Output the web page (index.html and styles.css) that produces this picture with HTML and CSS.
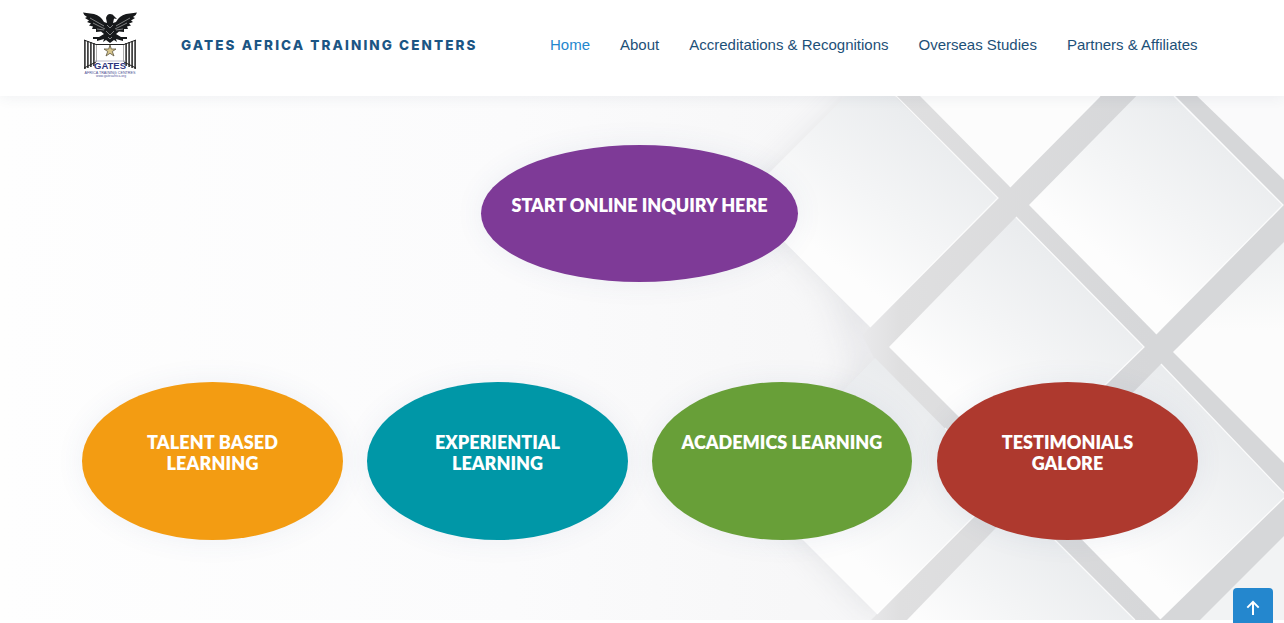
FILE: index.html
```html
<!DOCTYPE html>
<html lang="en">
<head>
<meta charset="utf-8">
<title>Gates Africa Training Centers</title>
<link rel="stylesheet" href="styles.css">
</head>
<body>
<header class="header">
  <a class="logo" href="#">
    <svg width="56" height="72" viewBox="82 11 56 72" aria-label="Gates">
      <path fill="#17191b" d="M83 12.5 L94 14 Q101 16 104 22 L107 23 L106 18 Q107 14 110 14 Q113 14 114 16 L117 19 L114 18.5 L113 23 L116 22 Q119 16 126 14 L137 12.5 Q136 16 133 17 L135 18 L131 20.5 L133 22 L129 23.5 L131 25.5 L127 26.5 L128 29 L124 29 L124 32 L119 31.5 L116 34 L121 37 L127 37 L127 39 L123 39 L123 41 L116 39 L117 42 L114 40 L110 43 L106 40 L103 42 L104 39 L97 41 L97 39 L93 39 L93 37 L99 37 L104 34 L101 31.5 L96 32 L96 29 L92 29 L93 26.5 L89 25.5 L91 23.5 L87 22 L89 20.5 L85 18 L87 17 Q84 16 83 12.5Z"/>
      <path stroke="#fff" stroke-width=".45" fill="none" d="M90 18L104 26M93 23L105 29M97 29L104 30M130 18L116 26M127 23L115 29M123 29L116 30M107 25L110 28L113 25M106 31L110 35L114 31M108 37L110 39L112 37"/>
      <g stroke="#222" fill="none" stroke-width="1.500">
        <path d="M84.900 40V69M87.900 41V68M90.900 42V67M93.900 43V66M135.100 40V69M132.100 41V68M129.100 42V67M126.100 43V66"/>
        <path d="M84 40L96 44.500M84 68L96 62M136 40L124 44.500M136 68L124 62M96 44.500H124" stroke-width="1"/>
      </g>
      <path d="M96.500 45V62M123.500 45V62" stroke="#999" stroke-width=".8"/>
      <path d="M110 45L111.300 49H116L112.300 51.500L114 56L110 53.300L106 56L107.700 51.500L104 49H108.700Z" fill="#d7c58b" stroke="#5d5540" stroke-width=".8"/>
      <path d="M94 61H126" stroke="#8b8ba4" stroke-width=".6"/>
      <text class="logo-name" x="94" y="69" textLength="32" lengthAdjust="spacingAndGlyphs">GATES</text>
      <text class="logo-sub" x="84.500" y="73.600" textLength="51" lengthAdjust="spacingAndGlyphs">AFRICA TRAINING CENTRES</text>
      <text class="logo-url" x="96" y="77.200" textLength="30" lengthAdjust="spacingAndGlyphs">www.gatesafrica.org</text>
    </svg>
  </a>
  <a class="brand" href="#">GATES AFRICA TRAINING CENTERS</a>
  <nav class="nav">
    <a class="active" href="#">Home</a>
    <a href="#">About</a>
    <a href="#">Accreditations &amp; Recognitions</a>
    <a href="#">Overseas Studies</a>
    <a href="#">Partners &amp; Affiliates</a>
  </nav>
</header>
<main class="hero">
  <svg class="backdrop" viewBox="0 96 1284 524" preserveAspectRatio="none" aria-hidden="true">
    <defs>
      <linearGradient id="wash"><stop offset="0" stop-color="#fefefe"/><stop offset=".4" stop-color="#fbfbfc"/><stop offset=".62" stop-color="#f7f7f8"/></linearGradient>
      <linearGradient id="tile" x1=".72" y1=".2" x2=".32" y2=".72"><stop offset="0" stop-color="#eaecee"/><stop offset=".55" stop-color="#f4f5f6"/><stop offset="1" stop-color="#fdfdfd"/></linearGradient>
      <linearGradient id="pale" x1=".5" y1="0" x2=".5" y2="1"><stop offset="0" stop-color="#f0f2f3"/><stop offset=".4" stop-color="#fcfcfc"/></linearGradient>
      <linearGradient id="gap" gradientUnits="userSpaceOnUse" x1="856" y1="300" x2="1150" y2="300"><stop offset="0" stop-color="#ebebed"/><stop offset=".15" stop-color="#dfdfe0"/><stop offset="1" stop-color="#d6d7d9"/></linearGradient>
      <filter id="soft" x="-30%" y="-30%" width="160%" height="160%" color-interpolation-filters="sRGB"><feGaussianBlur stdDeviation="14"/></filter>
      <filter id="edge" color-interpolation-filters="sRGB"><feGaussianBlur stdDeviation=".5"/></filter>
    </defs>
    <path fill="url(#wash)" d="M0 96H1284V620H0Z"/>
    <g filter="url(#soft)" fill="#dfe0e3">
      <path d="M742 200L870 72L998 200L870 334Z" opacity=".75"/>
      <path d="M750 487L877 350L1003 487L877 620Z" opacity=".75"/>
      <path d="M830 300L880 310L900 390L850 370Z" opacity=".5"/>
    </g>
    <g filter="url(#edge)">
      <path fill="url(#gap)" d="M896 96H1284V620H871L877 614L970 518L900 385L875 360L862 335L870 327L900 200Z"/>
      <path fill="url(#pale)" d="M830 6H1100V96L1010 187L920 96Z"/>
      <path fill="url(#tile)" d="M742 200L870 72L998 198L870 327Z"/>
      <path fill="url(#tile)" d="M1029 205L1156 76L1283 205L1156 334Z"/>
      <path fill="#fafafb" d="M1197 96H1284V180Z"/>
      <path fill="url(#tile)" d="M889 347L1016 217L1144 347L1016 474Z"/>
      <path fill="url(#pale)" d="M1173 352L1284 242V463Z"/>
      <path fill="url(#tile)" d="M750 487L875 358L1003 487L877 614Z"/>
      <path fill="url(#tile)" d="M1035 492L1161 364L1284 493V498L1160 619Z"/>
      <path fill="url(#tile)" d="M907 620L1019 504L1135 620V740H907Z"/>
      <path fill="#f2f3f4" d="M1284 536V620H1200Z"/>
    </g>
    <path d="M896 96L998 198L870 327M1100 96L1010 187M1174 96L1283 205L1156 334M1016 217L1144 347L1104 386M945 428L1003 487L877 614M1161 364L1284 493M1284 498L1160 619M1040 525L1135 620" fill="none" stroke="#fff" stroke-width="1.300" opacity=".85"/>
  </svg>
  <div class="grid">
    <a class="oval inquiry" href="#">START ONLINE INQUIRY HERE</a>
    <a class="oval talent" href="#"><span>TALENT BASED</span><span>LEARNING</span></a>
    <a class="oval experiential" href="#"><span>EXPERIENTIAL</span><span>LEARNING</span></a>
    <a class="oval academics" href="#">ACADEMICS LEARNING</a>
    <a class="oval testimonials" href="#"><span>TESTIMONIALS</span><span>GALORE</span></a>
  </div>
</main>
<a class="back-to-top" href="#" aria-label="Back to top">
  <svg width="14" height="16" viewBox="0 0 14 16"><path d="M7 15V2M1.300 7.600L7 1.900L12.700 7.600" fill="none" stroke="#fff" stroke-width="2"/></svg>
</a>
</body>
</html>
```
FILE: styles.css
```css
* { box-sizing: border-box; }
body { margin: 0; height: 623px; overflow: hidden; background: #fff; font-family: "Open Sans", sans-serif; }
a { text-decoration: none; color: inherit; }

.header {
  position: relative;
  z-index: 2;
  display: flex;
  height: 96px;
  padding: 0 82px;
  background: #fff;
  box-shadow: 0 0 14px rgba(60, 80, 100, 0.09);
}
.logo { padding-top: 11px; width: 56px; }
.logo svg { display: block; overflow: visible; }
.logo-name { font: bold 9.500px "Liberation Sans", Arial, sans-serif; fill: #30367e; }
.logo-sub { font: 4.200px "Liberation Sans", Arial, sans-serif; fill: #4b4f92; }
.logo-url { font: 3px "Liberation Sans", Arial, sans-serif; fill: #55599a; }
.brand {
  width: 368px;
  padding-left: 43px;
  font: 800 13.500px/90px Inter, sans-serif;
  letter-spacing: 2.090px;
  white-space: nowrap;
  color: #1b5584;
}
.nav {
  display: flex;
  gap: 30px;
  padding-left: 44px;
  font: 15px/90px "Liberation Sans", Arial, sans-serif;
  white-space: nowrap;
}
.nav a { color: #1d5078; }
.nav .active { color: #2487ce; }

.hero { position: relative; height: 524px; padding: 49px 86px 0 82px; }
.backdrop { position: absolute; inset: 0; width: 100%; height: 100%; }
.grid {
  position: relative;
  display: grid;
  grid-template-columns: 261px 261px 261px 261px;
  grid-template-rows: 137px 158px;
  row-gap: 100px;
  justify-content: space-between;
}
.oval {
  display: flex;
  flex-direction: column;
  align-items: center;
  padding-top: 50px;
  border-radius: 50%;
  box-shadow: 0 0 29px rgba(68, 88, 144, 0.08);
  color: #fff;
  font: 800 18px/21px Lato, sans-serif;
  white-space: nowrap;
}
.inquiry { grid-column: 1 / -1; justify-self: center; width: 317px; margin-right: 1px; background: #7e3a97; letter-spacing: -0.050px; }
.talent { background: #f39c12; letter-spacing: 0.150px; }
.experiential { background: #0097a7; }
.academics { width: 260px; background: #689f38; }
.testimonials { background: #ae392e; }

.back-to-top {
  position: fixed;
  z-index: 3;
  left: 1233px;
  top: 588px;
  display: flex;
  align-items: center;
  justify-content: center;
  width: 40px;
  height: 40px;
  border-radius: 4px;
  background: #2487ce;
}
```
